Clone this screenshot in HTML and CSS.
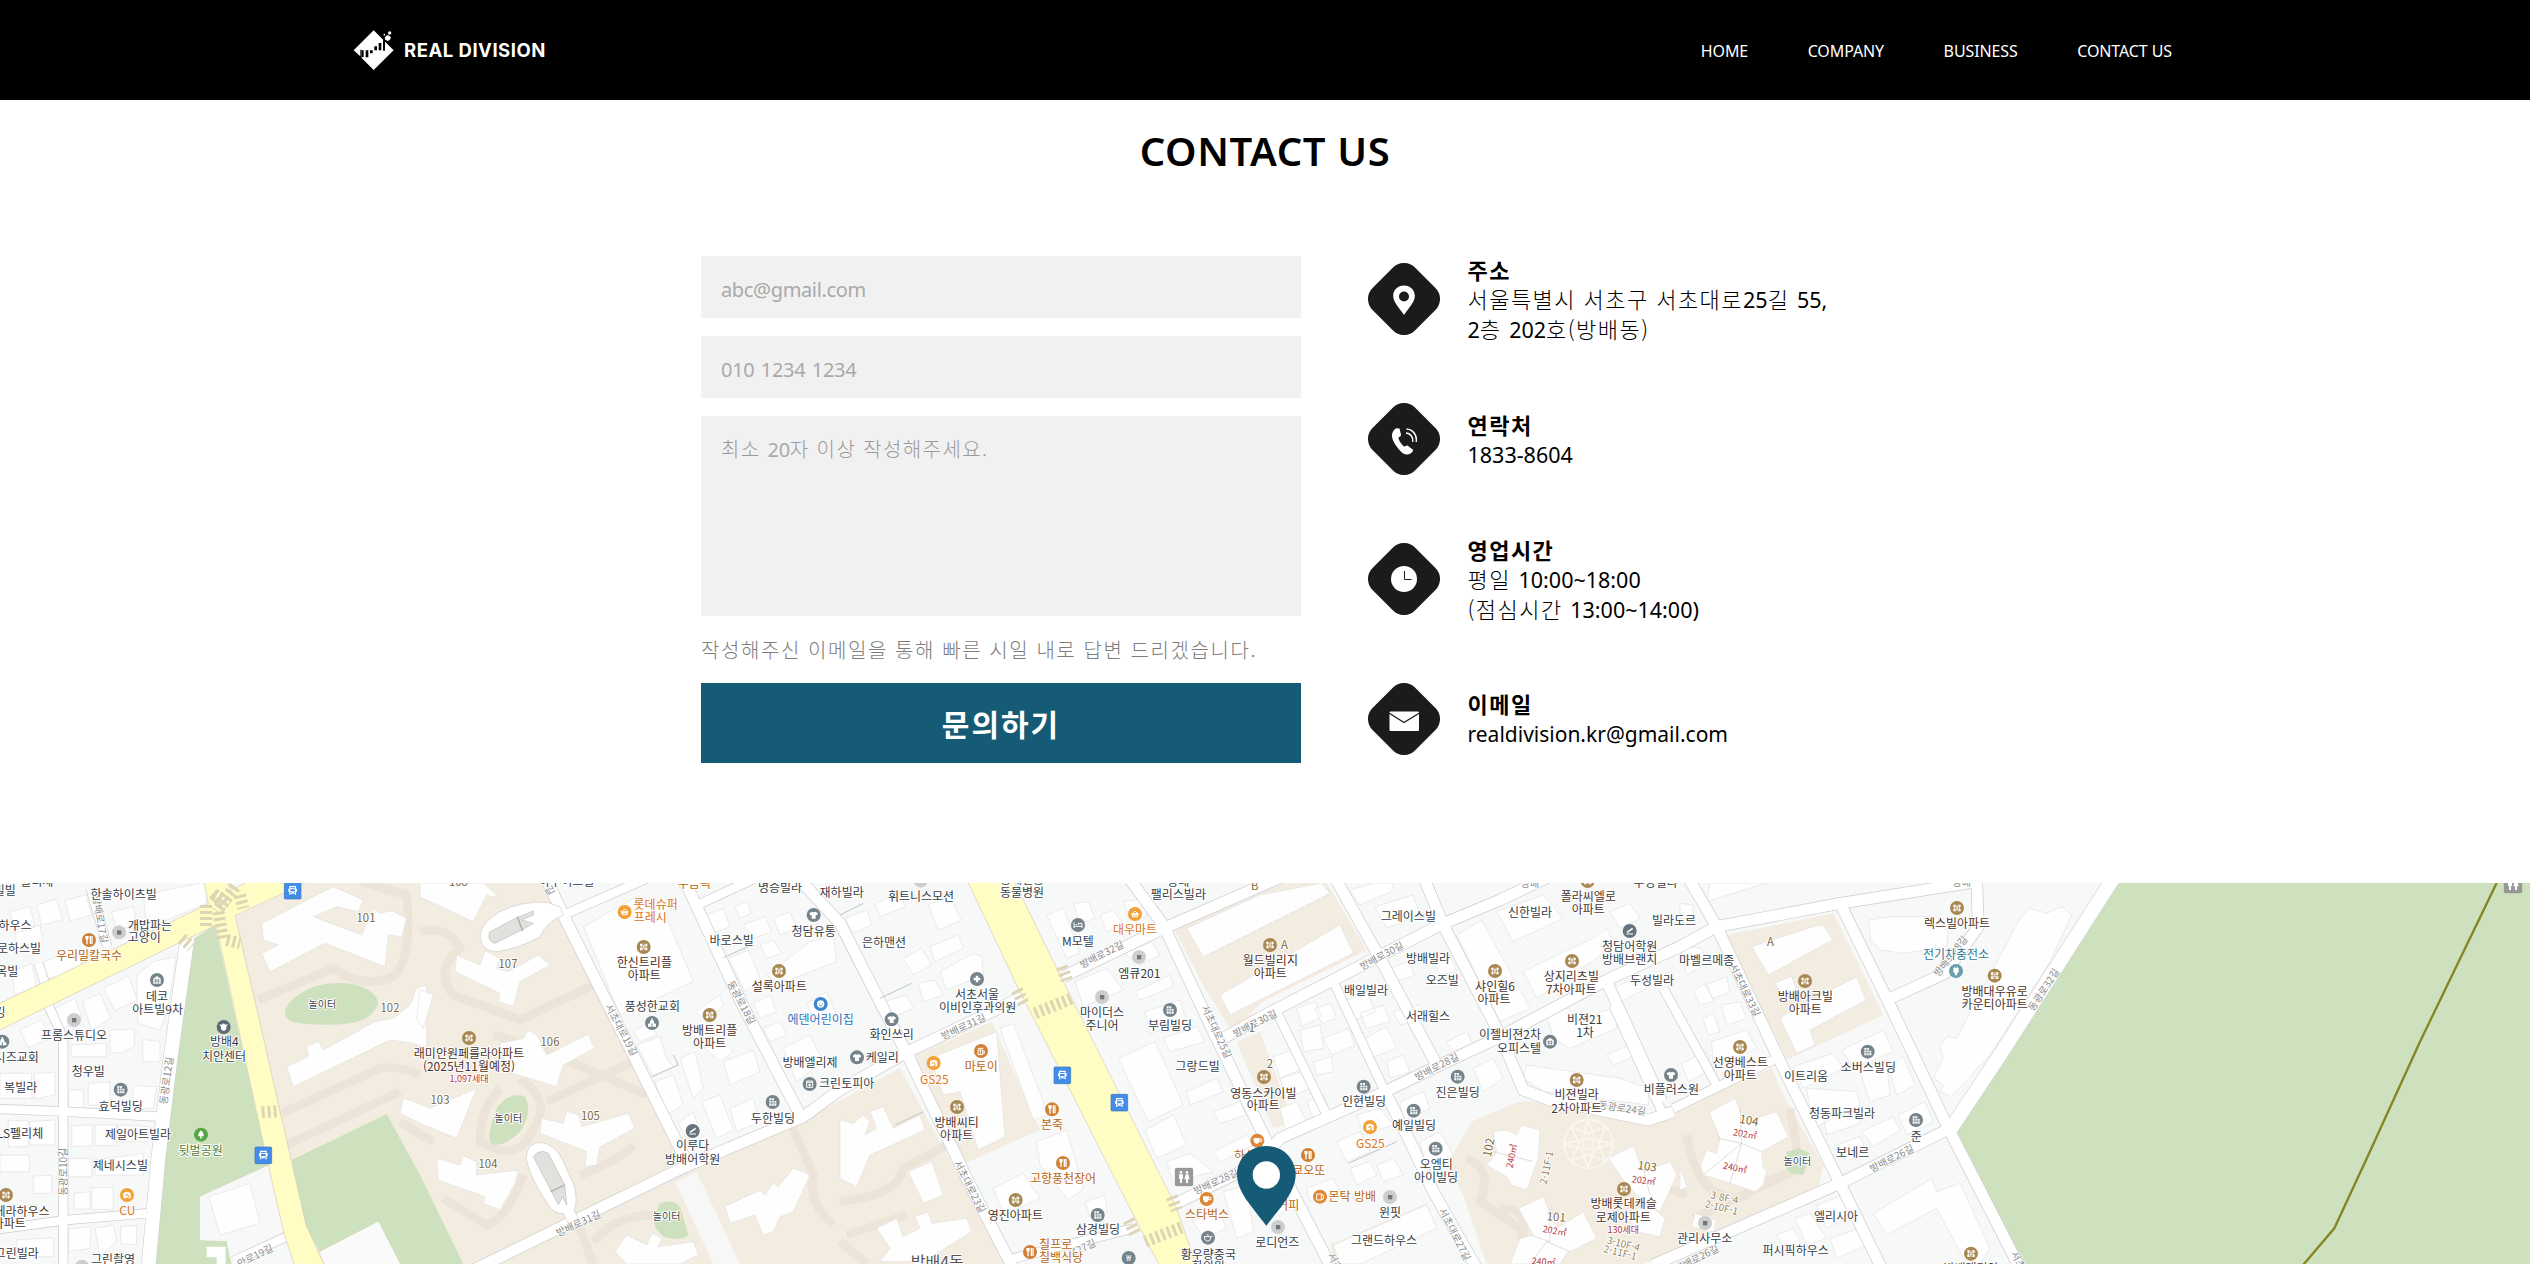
FILE: index.html
```html
<!DOCTYPE html>
<html lang="ko">
<head>
<meta charset="utf-8">
<title>REAL DIVISION - CONTACT US</title>
<link rel="stylesheet" href="styles.css">
</head>
<body>
<header class="header">
  <a class="logo">
    <svg class="logo-mark" viewBox="0 0 126 126" width="42" height="42">
      <path fill="#fff" d="M62 4 92 34V62H96V38L122 64 62 123 26 87V62H22V82L2 64Z"/>
      <path fill="#000" d="M26 64h6v20h-6zM38 64h8v21h-8zM51 64h8v9h-8zM64 52h8v12h-8zM77 42h8v22h-8zM90 34h6v31h-6z"/>
      <path fill="#fff" d="M104 18l7 4 3 5-4 6-6 3-7-4-2-6 4-5z"/>
      <circle cx="110" cy="12" r="5" fill="#fff"/><circle cx="94" cy="17" r="2.500" fill="#fff"/>
    </svg>
    <span class="logo-text">REAL DIVISION</span>
  </a>
  <nav class="nav"><a>HOME</a><a>COMPANY</a><a>BUSINESS</a><a>CONTACT US</a></nav>
</header>
<main>
  <h1 class="title">CONTACT US</h1>
  <section class="contact">
    <form class="form">
      <div class="field"><span class="lat">abc@gmail.com</span></div>
      <div class="field"><span class="num">010 1234 1234</span></div>
      <div class="field field-area">최소 <span class="lat">20</span>자 이상 작성해주세요.</div>
      <p class="note">작성해주신 이메일을 통해 빠른 시일 내로 답변 드리겠습니다.</p>
      <button class="submit" type="button">문의하기</button>
    </form>
    <ul class="info">
      <li class="info-row">
        <svg width="72" height="72" viewBox="0 0 72 72"><rect class="badge" x="6" y="6" width="60" height="60" rx="15.500" transform="rotate(45 36 36)"/><path fill="#fff" fill-rule="evenodd" d="M36 22.500c-6.300 0-10.800 4.600-10.800 10.500C25.200 39 31 44.500 36 52c5-7.500 10.800-13 10.800-19 0-5.900-4.500-10.500-10.800-10.500zM36 28.500a5 5 0 1 1 0 10 5 5 0 0 1 0-10z"/></svg>
        <div><b>주소</b><br>서울특별시 서초구 서초대로<span class="lat">25</span>길 <span class="lat">55,</span><br><span class="lat">2</span>층 <span class="lat">202</span>호(방배동)</div>
      </li>
      <li class="info-row">
        <svg width="72" height="72" viewBox="0 0 72 72"><rect class="badge" x="6" y="6" width="60" height="60" rx="15.500" transform="rotate(45 36 36)"/><path fill="#fff" d="M28.500 25.300l3 .2 1.600 6.500c-.4 1.400-2.500 2-2.700 3 .7 3.500 3.300 6.500 5.600 8.500 1.200.6 2-1.300 3.800-.8l5.200 4c.6 1.500-2 4.400-5.500 4.800-3 .1-5.500-1.600-8-4.600C28 43 24.600 38 24 33.500c-.2-3.500 1.500-7 4.500-8.200z"/><path fill="none" stroke="#fff" stroke-width="1.500" d="M38.500 26c6.500.4 10.500 6 9.800 13M38 30c4.500.3 7.400 4 6.800 8.800"/></svg>
        <div><b>연락처</b><br><span class="lat">1833-8604</span></div>
      </li>
      <li class="info-row">
        <svg width="72" height="72" viewBox="0 0 72 72"><rect class="badge" x="6" y="6" width="60" height="60" rx="15.500" transform="rotate(45 36 36)"/><circle cx="36" cy="36" r="13" fill="#fff"/><path fill="none" stroke="#1b1b1b" d="M36.500 28v8.500H43.500"/></svg>
        <div><b>영업시간</b><br>평일 <span class="lat">10:00~18:00</span><br>(점심시간 <span class="lat">13:00~14:00)</span></div>
      </li>
      <li class="info-row">
        <svg width="72" height="72" viewBox="0 0 72 72"><rect class="badge" x="6" y="6" width="60" height="60" rx="15.500" transform="rotate(45 36 36)"/><rect x="21.500" y="28.500" width="29.500" height="19.500" rx="1" fill="#fff"/><path fill="none" stroke="#1b1b1b" stroke-width="1.300" d="M21 30l15 9.500L51.500 30"/></svg>
        <div><b>이메일</b><br><span class="mail">realdivision.kr@gmail.com</span></div>
      </li>
    </ul>
  </section>
</main>
<section class="map">
<svg class="map-svg" viewBox="0 24 7590 1143" width="2530" height="381">
<defs>
  <g id="apt"><circle r="21" fill="#a98752"/><path fill="#fff" d="M-11-10h9v5h4v-5h9v7h-2v5h2v8h-9V5h-4v5h-9V2h2v-5h-2z"/><path stroke="#a98752" stroke-width="2" d="M-4-8V8M4-8V8M-9 0H9"/></g>
  <g id="bld"><circle r="21" fill="#75838a"/><path fill="#fff" d="M-10-11H4V-3h7V11H-10z"/><path stroke="#75838a" stroke-width="2" d="M-3-11V11M4-3V11M-10-4H4M-10 3H11"/></g>
  <g id="home"><circle r="21" fill="#75838a"/><path fill="#fff" d="M0-12 11-4V11H-11V-4z"/><path stroke="#75838a" stroke-width="2" d="M-4-4V11M4-4V11M-8 0H8M-8 5H8"/></g>
  <g id="shirt"><circle r="21" fill="#75838a"/><path fill="#fff" d="M-5-10Q0-6 5-10L13-5 10 1 6 0V11H-6V0l-4 1-3-6z"/></g>
  <g id="church"><circle r="21" fill="#75838a"/><path fill="#fff" d="M-2-14h4v4L6-5V0l6 3v8H-12V3l6-3v-5l4-5z"/><path stroke="#75838a" stroke-width="3" d="M0 1V11"/></g>
  <g id="pen"><circle r="21" fill="#68747d"/><path stroke="#fff" stroke-width="5" d="M-8 4 9-8"/><path stroke="#fff" stroke-width="3" d="M-10 9H10"/></g>
  <g id="dot"><circle r="21" fill="#ccced0"/><path fill="#74767a" d="M-6-6H7V7H-6z"/></g>
  <g id="food"><circle r="21" fill="#cf8136"/><path stroke="#fff" stroke-width="4" d="M-6-4V13M4-12V12M9-12V12"/><path fill="#fff" d="M-11-12h10v8q-5 7-10 0z"/></g>
  <g id="cup"><circle r="21" fill="#dd8737"/><path fill="#fff" d="M-11-8H7V1q-3 9-9 9t-9-9z"/><path fill="none" stroke="#fff" stroke-width="3" d="M6-5h7v7H5"/></g>
  <g id="mug"><circle r="21" fill="#cf8136"/><path fill="none" stroke="#fff" stroke-width="3" d="M-9-3H5V11H-9zM5 0h5v7H5M-2-3V11M-10-8H7"/></g>
  <g id="basket"><circle r="21" fill="#f3a136"/><path fill="#fff" d="M-12-2h24v3h-2L8 10H-8l-2-9h-2z"/><path fill="none" stroke="#fff" stroke-width="3" d="M-7-2 0-9 7-2"/><path stroke="#f3a136" stroke-width="2" d="M-4 3v5M0 3v5M4 3v5"/></g>
  <g id="store"><circle r="21" fill="#f3a136"/><path fill="#fff" d="M-11 10V-5q4-5 11-5t11 5v15z"/><path fill="none" stroke="#f3a136" stroke-width="3" d="M-4 3q0-5 4-5t4 5v5h-5"/></g>
  <g id="tree"><circle r="21" fill="#58a548"/><path fill="#fff" d="M0-13Q10-3 8 5H2v7h-4V5h-6Q-10-3 0-13z"/></g>
  <g id="police"><circle r="21" fill="#5c6a75"/><path fill="#fff" d="M-13-8l8 1 5-4 5 4 8-1-5 7q2 11-8 12-10-1-8-12z"/></g>
  <g id="bus"><rect x="-25" y="-25" width="50" height="50" rx="3" fill="#438de8" stroke="#3673bd" stroke-width="2"/><path fill="#fff" fill-rule="evenodd" d="M-10-14h20v8h3v9h-3v9H6V9H-6v3h-4V3h-3v-9h3zM-7-10v3H7v-3zM-7-4V2H7v-6zM-7 4v3h3V4zM4 4v3h3V4z"/></g>
  <g id="wc"><rect x="-26" y="-26" width="52" height="52" rx="3" fill="#999" stroke="#818181" stroke-width="2"/><g fill="#fff"><circle cx="-9" cy="-14" r="4"/><circle cx="9" cy="-14" r="4"/><path d="M-15-8h12v14h-3v12h-6V6h-3zM5-8h8l4 15h-5v11H6V7H1z"/></g></g>
  <g id="hosp"><circle r="21" fill="#75838a"/><path stroke="#fff" stroke-width="7" d="M-10 0H10M0-10V10"/></g>
  <g id="bed"><circle r="21" fill="#75838a"/><path fill="none" stroke="#fff" stroke-width="3" d="M-12-8V9M-12 4H12V9M-7-1H-3M1 0V-5H12V4"/></g>
  <g id="kid"><circle r="21" fill="#3d86cb"/><circle r="11" fill="#fff"/><path fill="none" stroke="#3d86cb" stroke-width="3" d="M-5-3v2M5-3v2M-4 4q4 4 8 0"/></g>
  <g id="plug"><circle r="21" fill="#6a9fae"/><path fill="#fff" d="M-5-13h3v4h4v-4h3v4h3V3L3 8v5h-6V8l-5-5V-9h3z"/></g>
  <g id="tea"><circle r="21" fill="#75838a"/><path fill="none" stroke="#fff" stroke-width="3" d="M-11-3H8q0 13-9 13T-11-3M9-2l5-3M-4-8H2"/></g>
  <g id="box"><circle r="21" fill="#dd8737"/><path fill="none" stroke="#fff" stroke-width="3" d="M-10-8H4V10H-10zM4-8l6 3V7L4 10"/></g>
  <g id="laundry"><circle r="21" fill="#75838a"/><path fill="none" stroke="#fff" stroke-width="3" d="M-9-9H9V10H-9zM-9-5H9"/><circle cy="3" r="4" fill="#fff"/></g>
  <g id="road-s">
    <path d="M0 702 180 709 480 725M145 390 190 490V1167M0 1062 200 1035 440 1015M272 40 322 215M700 1158 860 1085M115 265 140 340M3040 1150 3400 1060"/>
    <path d="M1690 120 2010-20M2075 98 2330-20M4840 390 4990 720M4990 340 5150 630M5020 700 5320 555M3830 410 3990 740M4005 330 4155 650"/>
  </g>
  <g id="road-m">
    <path d="M1645 24 1685 110 2050 840M1400 1195 2055 875 2410 725 2520 645 2720 532 3070 365"/>
    <path d="M2020-20 2065 40 2225 385 2400 720M2405 20 2520 145 2650 400 2725 545 2910 930 3045 1190"/>
    <path d="M3190 305 3480 165 3880-10M3380 0 3490 150 3640 470 3800 800 4005 1200"/>
    <path d="M3510 995 3780 860 3840 790 4155 650 4310 575 4500 485 4820 315 5040 215 5150 155 5520 85 5930 20"/>
    <path d="M3670 490 3780 428 4145 240 4320 150 4500 75 4700-20M4000 0 4140 250 4305 560M4260-20 4330 150 4500 480 4570 645 4650 675 4945 735 5020 710"/>
    <path d="M4150 640 4230 800 4300 950 4430 1180M4820 320 4985 680M5060 0 5150 155 5340 560 5520 925 5650 1190"/>
    <path d="M5520 85 5660 370 5845 760 6060 1180M5660 375 5835 295 5935 155 5930 10M4960 1170 5520 925 5850 760"/>
  </g>
  <g id="road-l"><path d="M562 190 510 560 475 850 445 1180M5850 765 6000 540 6340 10"/></g>
</defs>
<rect y="24" width="7590" height="1143" fill="#f7f8f8"/>

<!-- estates -->
<g fill="#f3ece1">
  <path d="M705 125 920 24H1645L1690 130 2060 865 1460 1167H970L915 1050 870 840 770 400z"/>
  <path d="M1500 1167 2040 900 2440 720 2700 580 3020 1167z"/>
  <path d="M2750 540 2975 440 3120 765 2885 870 2750 600z"/>
  <path d="M3515 150 3840 24H3980L4100 225 3780 385 3700 475 3610 330z"/>
  <path d="M3710 500 3780 470 3880 740 3820 760z"/>
  <path d="M4340 870 4415 740 4555 680 4650 680 4950 750 5040 690 5315 580 5345 650 5470 870 5455 935 4930 1167H4460L4390 960z"/>
  <path d="M3990 1110 4280 985 4310 1060 4070 1167H4010z"/>
  <path d="M5180 180 5500 115 5650 420 5360 555z"/>
</g>
<path fill="#f7f7f7" d="M2025 920 2090 890 2220 1167H2140z"/>
<g class="lane">
  <path d="M775 375 1000 280Q1080 340 1170 310 1240 270 1220 60L1080 20M845 715 1140 580Q1190 570 1260 600M850 815 1200 650M1200 740 1300 800M1260 170Q1340 150 1380 220 1300 290 1360 360L1560 435 1780 330M1480 480 1620 520 1940 660M1640 680 1900 560M1500 640Q1440 700 1440 800 1560 870 1600 760 1660 680 1560 610M1330 970 1460 1050Q1530 1020 1570 900M1740 900Q1850 860 1900 810M1740 1060 1780 1167M1780 1100Q1850 1020 1960 1020M2370 740 2440 900Q2420 980 2500 1050"/>
  <path d="M2520 980Q2700 960 2710 880L2860 800M2540 1080 2720 1020M2600 1167 2520 1100"/>
  <path d="M4400 850Q4480 880 4440 980L4560 1060M4500 1000Q4600 1000 4560 1100M4900 900 5060 960M5060 780Q5100 1000 5240 960M5370 700 5400 880 5250 940M5080 1030 5400 880"/>
</g>
<g fill="#cee1bf">
  <path d="M575 195 645 150 800 850 812 868 600 965V1095L680 1098 695 1167H455L470 950 500 700 545 400z"/>
  <path d="M875 855 1160 717 1260 900 1390 1167H1200L1135 1040 960 1130 915 1050z"/>
  <path d="M6350 24H7590V1167H6070L5860 765 5920 670 6080 450z"/>
  <path d="M920 345Q980 315 1060 328 1130 345 1134 385 1120 430 1060 443 980 455 900 445 850 440 855 405 870 370 920 345z"/>
  <path d="M1490 700Q1530 645 1575 665 1600 710 1560 770 1510 820 1475 806 1455 790 1490 700zM1980 985Q2020 970 2040 995L2065 1080Q2040 1100 1990 1085 1960 1060 1960 1030z"/>
  <path d="M5360 830 5395 820 5430 835 5410 900 5370 895 5355 870z"/>
</g>
<path fill="#fafafa" d="M960 1130 1135 1040 1200 1167H975z"/><path fill="#f8f8f8" d="M600 965 812 870 852 1075 690 1150 680 1098 600 1095z"/>
<path fill="#fff" d="M620 1115h57v52h-27v-20h-30z"/>

<!-- buildings -->
<g class="bd">
  <path d="M110 90 170 72 188 135 125 150zM195 75 258 60 275 120 210 138zM30 110 90 95 105 155 45 175zM125 265 215 225 245 250 240 300 140 310zM45 165 120 150 130 200 50 215zM335 110 400 95 410 150 350 165zM430 60 600 24H620V85L440 160zM35 290 95 265 110 335 45 360z"/>
  <path d="M310 340 385 303 412 375 345 407zM247 380 300 355 333 430 275 465zM165 400 225 370 245 425 190 460zM60 465 125 435 150 490 85 518zM410 300 460 260 528 245 505 400 480 465 413 445zM330 465 403 462V515L360 535 330 530zM213 510 320 505V545H213zM428 493 480 500V560H428zM103 595 165 592V660L103 672zM0 595H95V670H0zM265 625 330 620V690H265zM400 632 470 635 460 700H400zM205 645H250V703H205zM25 735 85 738V815H25zM90 740 165 735V810H90zM215 752 277 750V812L215 815zM285 750H350V812H285zM355 750 450 755 440 800H355zM205 850H275V905H205zM285 855 430 835V900H285zM100 903 155 901V955H100zM275 938 340 937V1003H275zM222 955 270 950V1002H222zM0 840H88V890H0zM207 1062 272 1055 270 1120 205 1130zM285 1060 340 1050 350 1100 300 1145zM362 1055 410 1052V1110L362 1105zM50 1095 160 1088V1145H50z"/>
  <path d="M627 965 750 925 780 1045 660 1080z"/>
  <path d="M785 145 1000 35 1090 75 1075 110 1010 95 940 125 1085 180 1120 100 1140 115 1175 107 1220 130 1205 185 1165 180 1155 275 975 205 810 290 785 235 835 210 790 195zM860 575 925 545 920 515 955 498 970 525 1125 440 1180 430 1230 390 1250 340 1280 330V520L1240 505 1170 495 880 635z"/>
  <path d="M1260 24H1450L1500 70 1460 60 1420 140 1260 65zM1370 240 1440 270 1455 228 1500 250 1490 280 1525 290 1615 240 1650 270 1560 320 1540 395 1495 380 1500 355 1365 290zM1200 715 1210 668 1290 700 1430 640 1370 790 1260 745zM1500 505 1570 490 1585 465 1610 480 1640 540 1765 478 1783 520 1690 570 1670 635 1520 590zM1260 345 1300 358 1270 460 1250 430zM1625 730 1690 745 1700 708 1735 720 1745 755 1885 715 1905 760 1800 815 1790 870 1755 875 1760 830 1620 775zM1310 850 1380 870 1390 842 1430 860 1430 900 1555 885 1545 925 1500 1005 1450 985 1455 965 1315 915zM2175 995 2280 945 2295 960 2320 925 2335 935 2380 880 2430 900 2380 1010 2340 1025 2320 1070 2290 1080 2265 1020 2190 1045zM1845 1130 1880 1080 1940 1110 1955 1075 1985 1090 1975 1115 2080 1100 2095 1140 2040 1167H1880z"/>
  <path d="M1750 155 1910 65 1980 80 2080 320 1860 420z"/>
  <path d="M2120 120 2170 100 2190 155 2140 175zM2205 95 2240 80 2255 115 2220 130zM2230 150 2295 125 2315 170 2260 190zM2185 250 2245 225 2285 320 2235 350zM2320 130 2370 110 2390 160 2340 180zM2280 210 2320 195 2345 235 2300 250zM2300 300 2430 200 2500 185 2510 260 2380 310 2370 350zM2260 385 2310 360 2330 410 2280 430zM2420 385 2480 350 2510 420 2450 450zM2290 460 2340 440 2360 480 2310 500z"/>
  <path d="M1910 510 1980 485 2000 550 2020 575 1960 605zM1965 620 2020 600 2050 690 2000 720zM2040 550 2085 530 2110 640 2080 670zM2105 510 2150 480 2200 530 2160 560zM2170 560 2260 525 2280 590 2190 630zM2105 680 2160 660 2200 765 2150 790zM2190 700 2260 670 2280 740 2210 770zM2350 520 2430 480 2470 560 2390 620zM2085 410 2160 360 2170 390 2120 440zM1900 470 1950 440 1970 480 1920 500zM2035 745 2080 710 2100 770 2060 790z"/>
  <g transform="translate(2520)">
    <path d="M15 130 80 105 95 150 40 175zM105 85 180 55 195 95 120 125zM265 90 330 65 365 135 295 165zM190 250 245 220 275 270 220 300zM270 215 355 180 370 220 285 260zM300 290 400 235 425 245 430 300 320 345zM235 325 285 315 310 360 250 380zM130 380 200 360 220 400 150 430zM620 120 670 100 720 235 680 250zM700 85 745 80 765 130 720 145zM780 120 820 105 850 150 800 170zM850 80 915 70 920 125 870 135zM855 235 935 200 960 240 900 270zM705 320 800 280 850 345 730 395zM885 350 990 300 1000 335 900 375zM915 410 1020 375 1040 440 930 475zM835 550 945 500 1030 690 925 740zM1040 650 1130 610 1150 650 1050 690zM970 490 1070 455 1095 500 990 530z"/>
    <path d="M480 460 520 445 625 720 580 735zM270 550 470 470 495 785 415 825 360 650 310 660zM590 800 680 765 730 940 685 975 600 870zM460 940 550 895 600 970 490 1020zM735 980 795 960 800 1010 750 1025zM915 765 1000 720 1040 810 950 850zM980 860 1050 835 1120 890 1000 920zM1120 710 1200 680 1220 720 1140 745zM1060 1040 1130 1000 1160 1060 1090 1090zM1150 950 1220 930 1240 1070 1190 1090zM1120 830 1220 780 1240 810 1140 860z"/>
    <path d="M0 735 40 745 70 720 90 740 75 780 110 760 90 710 130 695 160 760 240 720 255 765 90 840 50 935 0 910zM205 890 275 860 310 960 250 985zM110 1060 170 1030 190 1085 240 1060 225 1025 265 1010 275 1045 380 1030 395 1070 250 1160 120 1160 150 1120z"/>
  </g>
  <g transform="translate(3780)">
    <path d="M-220 160 0 60 185 24 210 55-170 245zM-120 360 240 150 280 235-90 420zM345 95 460 60 480 120 380 160zM270 45 340 24H400L395 50 300 90zM590 180 665 135 810 400 720 440zM710 110 850 60 910 130 760 200zM790 290 870 250 1000 190 1040 160 1060 200 1010 250 830 370zM1050 110 1110 85 1140 130 1080 160zM1060 340 1140 300 1160 340 1080 380z"/>
    <path d="M110 400 165 380 185 425 125 455zM165 400 210 385 230 430 185 445zM120 465 180 450 190 520 130 530zM190 490 265 460 285 510 215 540zM160 560 215 545 220 590 170 600zM250 380 320 350 345 410 275 440zM390 280 445 260 465 300 410 320zM300 415 370 390 390 440 320 460zM315 490 380 455 410 520 330 550zM400 410 480 390 500 430 420 450zM380 560 430 540 450 590 390 610zM560 500 620 470 640 510 580 530zM520 260 570 240 590 290 540 300zM640 580 700 550 730 610 670 650zM40 545 110 520 130 580 60 610zM60 610 130 590 150 640 80 670zM60 700 110 680 140 740 80 780zM140 680 190 660 210 710 160 730zM290 720 360 700 400 750 310 780zM230 800 300 770 330 830 260 860zM420 680 490 650 510 700 430 740zM480 800 540 770 580 840 500 880zM270 880 330 860 350 900 290 930zM350 870 400 850 430 900 370 920zM140 940 220 910 240 950 150 980zM20 960 60 940 90 1000 40 1030z"/>
    <path d="M860 420 920 400 970 450 1020 410 1070 400 1070 460 930 520 880 490zM1040 540 1130 500 1150 530 1060 570zM800 570 1080 610 1165 640 1165 690 850 650 790 610zM220 1110 500 990 530 1060 300 1167H240z"/>
    <path d="M700 770 740 765 770 780 785 750 840 765 835 850 800 945 755 930 740 905 680 870 710 830zM1045 850 1120 812 1150 890 1230 860 1250 900 1200 1010 1150 980 1100 930zM1100 1020 1160 980 1215 1030 1200 1085 1130 1070zM775 1000 850 965 890 1060 970 1010 1010 1090 920 1135 900 1167H750L780 1090 820 1080z"/>
  </g>
  <g transform="translate(5040)">
    <path d="M215 215 400 155 430 150 458 195 265 300zM285 325 335 303 350 350 310 360zM300 430 380 380 530 307 558 375 390 465 405 510 350 535zM565 135 630 125 770 125 805 170 800 215 670 235 600 225 572 195zM1020 130 1050 100 1100 115 1145 95 1175 120 1110 260 930 540 815 665 780 650 790 630 760 610 790 550 780 515 800 485 830 490zM40 345 80 325 100 380 60 390zM75 330 140 305 150 350 100 370zM125 390 180 380 200 430 140 450zM70 430 100 415 120 470 85 480zM5 565 80 530 100 580 25 620zM95 500 200 465 230 520 100 580zM0 210 60 220 90 260 20 300zM485 525 610 465 640 530 520 580zM540 590 620 560 630 660 570 680zM625 570 670 545 705 630 650 660zM340 575 460 535 490 580 370 640zM380 640 530 650 540 690 400 760zM430 720 530 720 540 745 440 780zM545 770 640 725 660 765 580 815zM470 810 540 785 560 830 500 860zM655 720 735 680 760 740 680 780z"/>
    <path d="M88 712 165 670 195 740 290 710 325 785 245 830 250 880 260 885 250 930 225 950 150 925 70 900 62 870 80 825 110 835 120 790zM0 880 22 935 0 945zM580 1015 755 910 770 950 840 925 930 1120 900 1167 850 1150 770 1000 620 1080zM345 1030 390 1015 440 1090 380 1110zM410 990 490 960 520 1020 440 1060zM290 1080 340 1060 370 1120 320 1140zM450 1090 540 1060 560 1110 470 1150zM45 1015 110 1035 100 1070 35 1055zM0 85 40 90V130H0zM90 24H260L80 80z"/>
  </g>
</g>
<g fill="none" stroke="#c4bfb9" stroke-width="1.500"><path d="M4480 830 4600 860M4640 1100 4590 1167M4640 1100 4710 1130M4650 1000V1100L4590 1080M5220 700 5225 805 5285 830M5225 805 5155 790M5225 805 5190 925M5110 900 5225 805M4930 880 4950 960"/></g>
<g fill="none" stroke="#fbf7ee" stroke-width="5"><circle cx="4765" cy="807" r="73"/><circle cx="4765" cy="807" r="16"/><path d="M4765 734 4785 795 4838 807 4783 822 4765 880 4747 822 4692 807 4747 795zM4713 755 4765 775 4817 755 4795 807 4817 859 4765 838 4713 859 4737 807z"/></g>

<!-- streets -->
<g class="case"><use class="ws" href="#road-s"/><use class="wm" href="#road-m"/><use class="wl" href="#road-l"/></g>
<g class="fill"><use class="ws" href="#road-s"/><use class="wm" href="#road-m"/><use class="wl" href="#road-l"/></g>
<!-- car park ramps -->
<g fill="#e3e1dd">
  <path fill="#fff" stroke="#cfcbc4" stroke-width="2" d="M1640 82Q1560 78 1500 110 1440 145 1440 185 1445 230 1490 230 1560 220 1620 185 1640 140 1690 120L1680 95z"/>
  <path stroke="#bbb" stroke-width="2" d="M1468 172 1550 128 1600 108 1600 120 1565 135 1600 145 1565 165 1485 205Q1462 200 1468 172z"/><path stroke="#aaa" stroke-width="4" d="M1552 125 1568 168"/>
  <path fill="#fff" stroke="#cfcbc4" stroke-width="2" d="M1578 850Q1580 802 1625 802 1665 810 1685 850L1722 930Q1735 980 1722 1005L1735 1030 1705 1045 1690 1015Q1665 1020 1645 990 1590 910 1578 850z"/>
  <path stroke="#bbb" stroke-width="2" d="M1600 845Q1620 820 1645 835L1694 930 1700 990 1688 965 1675 990 1655 950z"/><path stroke="#aaa" stroke-width="4" d="M1652 950 1694 930"/>
</g>
<g fill="#fffcc4" stroke="#d2c9bd" stroke-width="2">
  <path d="M-5 387 625 87 612 20H683L692 46 745 20H925L705 122 770 400 870 840 918 1050 975 1175H885L852 1075 800 850 648 150-5 467z"/>
  <path d="M2903 20 3050 330 3400 1020 3480 1175H3590L3530 1000 3375 690 3180 300 3043 20z"/>
</g>
<g class="zebra">
  <path d="M640 55 680 95M705 35 650 110"/><path d="M618 90V162M655 110 668 190M680 195 720 205M720 60 730 100M640 60 665 70M785 712 840 708M545 190 575 215"/>
  <path d="M3105 415 3215 370M3435 1100 3550 1055M3050 345 3070 385M3185 275 3200 315M3385 1035 3405 1075M3515 965 3530 1005"/>
</g>
<path fill="none" stroke="#868423" stroke-width="7" d="M7490 24 7260 500 7105 840 7003 1060 6905 1175"/>
<g stroke="#bfc3c8" stroke-width="3" fill="none"><path d="M4045 865 4190 800M2685 750 2770 710M2640 370 2735 325M1955 605 2035 570 2020 540M2170 248 2255 210M2520 120 2590 85"/></g>

<!-- street names -->
<g class="st">
  <text transform="translate(290 135) rotate(80)">방배로17길</text>
  <text transform="translate(510 618) rotate(-82)">동광로12길</text>
  <text transform="translate(200 890) rotate(-90)">동광로10길</text>
  <text transform="translate(770 1152) rotate(-27)">안로19길</text>
  <text transform="translate(1855 470) rotate(62)">서초대로19길</text>
  <text transform="translate(2215 388) rotate(62)">동광로18길</text>
  <text transform="translate(1740 1055) rotate(-25)">방배로31길</text>
  <text transform="translate(1640 52) rotate(60)">길</text>
  <text transform="translate(2895 465) rotate(-25)">방배로31길</text>
  <text transform="translate(3310 248) rotate(-27)">방배로32길</text>
  <text transform="translate(2900 940) rotate(63)">서초대로23길</text>
  <text transform="translate(3640 475) rotate(65)">서초대로25길</text>
  <text transform="translate(3770 455) rotate(-27)">방배로30길</text>
  <text transform="translate(3652 930) rotate(-24)">방배로28길</text>
  <text transform="translate(3250 1130) rotate(-25)">로27길</text>
  <text transform="translate(4150 252) rotate(-28)">방배로30길</text>
  <text transform="translate(4315 585) rotate(-27)">방배로28길</text>
  <text transform="translate(4355 1083) rotate(63)">서초대로27길</text>
  <text transform="translate(4865 710) rotate(8)">동광로24길</text>
  <text transform="translate(5225 350) rotate(64)">서초대로33길</text>
  <text transform="translate(5860 250) rotate(-52)">방배로28길</text>
  <text transform="translate(6140 350) rotate(-57)">동광로32길</text>
  <text transform="translate(5680 860) rotate(-27)">방배로26길</text>
  <text transform="translate(5095 1160) rotate(-27)">방배로26길</text>
  <text transform="translate(3995 1165) rotate(63)">서초</text>
  <text transform="translate(6045 1160) rotate(63)">서초</text>
  <text x="4590" y="35">방배</text><text x="5885" y="32">방배</text>
</g>

<!-- places -->
<g class="lb">
  <g>
    <text x="14" y="61">빌빌</text><text x="110" y="34">빌리체</text><text x="371" y="73">한솔하이츠빌</text><text x="45" y="164">하우스</text><text x="57" y="235">로하스빌</text><text x="22" y="302">옥빌</text><text x="450" y="165">개밥파는</text><text x="433" y="202">고양이</text>
    <text x="471" y="377">데코</text><text x="473" y="416">아트빌9차</text><text x="222" y="496">프롬스튜디오</text><text x="50" y="562">시즈교회</text><text x="265" y="602">청우빌</text><text x="62" y="650">복빌라</text><text x="362" y="707">효덕빌딩</text><text x="50" y="788">LLS펠리체</text><text x="414" y="793">제일아트빌라</text><text x="361" y="884">제네시스빌</text><text x="50" y="1148">그린빌라</text><text x="339" y="1166">그린촬영</text><text x="0" y="425">킹</text>
    <text x="673" y="514">방배4</text><text x="672" y="557">치안센터</text><text class="sm" x="967" y="400">놀이터</text>
    <text class="br" x="66" y="1022">메라하우스</text><text class="br" x="28" y="1060">아파트</text>
    <text class="or" x="267" y="256">우리밀칼국수</text><text class="og" x="382" y="1019">CU</text><text class="gr" x="602" y="840">뒷벌공원</text>
    <text class="no" x="1098" y="140">101</text><text class="no" x="1170" y="410">102</text>
    <use href="#food" x="267" y="195"/><use href="#dot" x="357" y="172"/><use href="#home" x="471" y="315"/><use href="#dot" x="222" y="435"/><use href="#church" x="7" y="500"/><use href="#bld" x="362" y="644"/><use href="#police" x="671" y="456"/><use href="#tree" x="603" y="779"/><use href="#store" x="381" y="960"/><use href="#apt" x="18" y="960"/><use href="#bus" x="878" y="47"/><use href="#bus" x="790" y="841"/><use href="#dot" x="246" y="1175"/>
  </g>
  <g transform="translate(1260)">
    <text class="no" x="115" y="34">108</text><text x="440" y="34">하우이스빌</text><text class="or" x="823" y="38">우금떡</text><text x="1080" y="50">명승빌라</text><text x="1265" y="67">재하빌라</text><text x="935" y="210">바로스빌</text><text x="1181" y="182">청담유통</text><text x="697" y="409">풍성한교회</text><text x="1170" y="576">방배엘리제</text><text x="1280" y="640">크린토피아</text><text x="1059" y="743">두한빌딩</text><text x="818" y="825">이루다</text><text x="818" y="868">방배어학원</text>
    <text class="og" x="707" y="103">롯데슈퍼</text><text class="og" x="691" y="142">프레시</text><text class="bl" x="1202" y="447">에덴어린이집</text>
    <g class="br"><text x="673" y="275">한신트리플</text><text x="673" y="314">아파트</text><text x="1078" y="347">설록아파트</text><text x="869" y="481">방배트리플</text><text x="869" y="520">아파트</text><text x="147" y="550">래미안원페를라아파트</text><text x="147" y="589">(2025년11월예정)</text></g>
    <text class="rd" x="147" y="620">1,097세대</text>
    <text class="no" x="264" y="279">107</text><text class="no" x="390" y="513">106</text><text class="no" x="60" y="687">103</text><text class="no" x="511" y="735">105</text><text class="no" x="204" y="878">104</text>
    <text class="sm" x="265" y="741">놀이터</text><text class="sm" x="740" y="1034">놀이터</text>
    <use href="#basket" x="614" y="111"/><use href="#apt" x="671" y="216"/><use href="#shirt" x="1181" y="120"/><use href="#apt" x="1077" y="288"/><use href="#kid" x="1202" y="387"/><use href="#apt" x="869" y="420"/><use href="#church" x="696" y="444"/><use href="#apt" x="147" y="489"/><use href="#laundry" x="1169" y="627"/><use href="#bld" x="1058" y="681"/><use href="#pen" x="818" y="768"/>
  </g>
  <g transform="translate(2520)">
    <use href="#dot" x="242" y="17"/><text x="243" y="79">휘트니스모션</text><text x="546" y="27">방배친동</text><text x="546" y="65">동물병원</text><text x="1015" y="34">방배</text><text x="1015" y="73">팰리스빌라</text><text x="132" y="217">은하맨션</text><text x="714" y="212">M모텔</text><text x="898" y="309">엠큐201</text><text x="411" y="372">서초서울</text><text x="413" y="411">이비인후과의원</text><text x="786" y="427">마이더스</text><text x="786" y="466">주니어</text><text x="990" y="466">부림빌딩</text><text x="155" y="493">화인쓰리</text><text x="127" y="560">케일리</text><text x="1073" y="588">그랑드빌</text><text x="774" y="1078">삼경빌딩</text><text x="1105" y="1151">황우량중국</text><text x="1105" y="1188">한의원</text>
    <text class="big" x="292" y="1178">방배4동</text>
    <g class="br"><text x="350" y="755">방배씨티</text><text x="350" y="795">아파트</text><text x="526" y="1034">영진아파트</text><text x="1270" y="668">영동스카이빌</text><text x="1270" y="706">아파트</text><text x="1291" y="269">월드빌리지</text><text x="1291" y="308">아파트</text></g>
    <g class="or"><text x="424" y="589">마토이</text><text x="636" y="763">본죽</text><text x="669" y="925">고향풍천장어</text><text x="1101" y="1032">스타벅스</text><text x="647" y="1123">칠프로</text><text x="663" y="1162">칠백식당</text><text x="1215" y="856">하삼</text></g>
    <g class="og"><text x="885" y="177">대우마트</text><text x="283" y="626">GS25</text></g>
    <text class="no" x="1244" y="44">B</text><text class="no" x="1333" y="223">A</text><text class="no" x="1290" y="578">2</text><text class="no" x="1236" y="472">1</text>
    <use href="#bed" x="714" y="150"/><use href="#basket" x="885" y="117"/><use href="#dot" x="897" y="246"/><use href="#hosp" x="411" y="312"/><use href="#dot" x="786" y="366"/><use href="#bld" x="990" y="405"/><use href="#shirt" x="155" y="433"/><use href="#shirt" x="51" y="547"/><use href="#store" x="281" y="564"/><use href="#mug" x="423" y="528"/><use href="#bus" x="667" y="601"/><use href="#bus" x="838" y="683"/><use href="#apt" x="351" y="696"/><use href="#food" x="636" y="703"/><use href="#food" x="669" y="864"/><use href="#wc" x="1032" y="906"/><use href="#cup" x="1100" y="972"/><use href="#apt" x="527" y="975"/><use href="#bld" x="773" y="1020"/><use href="#tea" x="1104" y="1088"/><use href="#food" x="570" y="1131"/><circle cx="866" cy="1149" r="21" fill="#75838a"/><text class="won" x="866" y="1158">₩</text><use href="#cup" x="1252" y="797"/><use href="#apt" x="1290" y="210"/><use href="#apt" x="1272" y="606"/>
  </g>
  <g transform="translate(3780)">
    <text x="445" y="139">그레이스빌</text><text x="810" y="127">신한빌라</text><text x="504" y="265">방배빌라</text><text x="547" y="330">오즈빌</text><text x="318" y="361">배일빌라</text><text x="504" y="439">서래힐스</text><text x="1187" y="37">우성빌라</text><text x="1242" y="151">빌라도르</text><text x="1109" y="229">청담어학원</text><text x="1109" y="268">방배브랜치</text><text x="1176" y="331">두성빌라</text><text x="974" y="448">비젼21</text><text x="975" y="487">1차</text><text x="750" y="493">이젤비젼2차</text><text x="777" y="534">오피스텔</text><text x="312" y="694">인현빌딩</text><text x="593" y="667">진은빌딩</text><text x="462" y="766">예일빌딩</text><text x="529" y="882">오엠티</text><text x="528" y="922">아이빌딩</text><text x="390" y="1027">윈핏</text><text x="372" y="1110">그랜드하우스</text><text x="52" y="1116">로디언즈</text><text x="1234" y="658">비플러스원</text>
    <g class="br"><text x="985" y="79">폴라씨엘로</text><text x="985" y="116">아파트</text><text x="705" y="349">샤인힐6</text><text x="702" y="387">아파트</text><text x="934" y="318">상지리츠빌</text><text x="934" y="357">7차아파트</text><text x="950" y="672">비젼빌라</text><text x="950" y="715">2차아파트</text><text x="1091" y="1000">방배롯데캐슬</text><text x="1090" y="1041">로제아파트</text></g>
    <text class="rd" x="1090" y="1073">130세대</text><text class="og" x="331" y="818">GS25</text>
    <g class="or"><text x="130" y="900">쿄쿄오또</text><text x="277" y="978">몬탁 방배</text><text x="85" y="1005">커피</text></g>
    <g class="no"><text transform="translate(698 820) rotate(-78)">102</text><text transform="translate(1160 886) rotate(8)">103</text><text transform="translate(888 1038) rotate(4)">101</text></g>
    <g class="fl"><text transform="translate(870 880) rotate(-78)">2-11F-1</text><text transform="translate(1088 1117) rotate(14)">3-10F-4</text><text transform="translate(1078 1143) rotate(14)">2-11F-1</text></g>
    <g class="rd"><text transform="translate(765 845) rotate(-78)">240㎡</text><text transform="translate(1150 926) rotate(7)">202㎡</text><text transform="translate(882 1077) rotate(10)">202㎡</text><text transform="translate(850 1170) rotate(5)">240㎡</text></g>
    <use href="#apt" x="983" y="18"/><use href="#pen" x="1109" y="168"/><use href="#apt" x="936" y="258"/><use href="#apt" x="705" y="288"/><use href="#home" x="870" y="500"/><use href="#apt" x="950" y="615"/><use href="#shirt" x="1233" y="600"/><use href="#bld" x="593" y="605"/><use href="#bld" x="311" y="635"/><use href="#bld" x="461" y="707"/><use href="#store" x="330" y="756"/><use href="#bld" x="527" y="821"/><use href="#food" x="144" y="840"/><use href="#box" x="180" y="965"/><use href="#dot" x="390" y="966"/><use href="#dot" x="54" y="1056"/><use href="#apt" x="1092" y="942"/>
  </g>
  <g transform="translate(5040)">
    <text x="80" y="271">마벨르메종</text><text x="565" y="592">소버스빌딩</text><text x="378" y="619">이트리움</text><text x="486" y="728">청동파크빌라</text><text x="709" y="797">준</text><text x="518" y="846">보네르</text><text x="468" y="1039">엘리시아</text><text x="347" y="1141">퍼시픽하우스</text><text x="74" y="1104">관리사무소</text>
    <g class="br"><text x="831" y="160">렉스빌아파트</text><text x="376" y="379">방배아크빌</text><text x="376" y="418">아파트</text><text x="944" y="364">방배대우유로</text><text x="944" y="403">카운티아파트</text><text x="181" y="577">선영베스트</text><text x="181" y="615">아파트</text><text x="873" y="1193">방배래미안</text></g>
    <text class="tl" x="828" y="253">전기차충전소</text><text class="no" x="271" y="212">A</text><text class="sm" x="352" y="870">놀이터</text>
    <g class="no"><text transform="translate(205 748) rotate(10)">104</text></g>
    <g class="rd"><text transform="translate(193 787) rotate(10)">202㎡</text><text transform="translate(163 888) rotate(12)">240㎡</text></g>
    <g class="fl"><text transform="translate(131 978) rotate(12)">3-8F-4</text><text transform="translate(122 1008) rotate(14)">2-10F-1</text></g>
    <use href="#apt" x="831" y="99"/><use href="#plug" x="828" y="288"/><use href="#apt" x="944" y="302"/><use href="#apt" x="375" y="318"/><use href="#apt" x="180" y="516"/><use href="#bld" x="563" y="530"/><use href="#bld" x="708" y="735"/><use href="#dot" x="75" y="1044"/><use href="#apt" x="873" y="1136"/><use href="#wc" x="2499" y="27"/>
  </g>
</g>
<path fill="#155b75" d="M3799 813c-50 0-88 38-88 86 0 28 15 58 36 86 18 25 36 47 52 67 16-20 34-42 52-67 21-28 36-58 36-86 0-48-38-86-88-86z"/>
<circle cx="3799" cy="900" r="41" fill="#fff"/>
</svg>
</section>
</body>
</html>
```
FILE: styles.css
```css
* { box-sizing: border-box; margin: 0; padding: 0; }
body { width: 2530px; height: 1264px; overflow: hidden; background: #fff; color: #000; font-family: "Noto Sans", "Noto Sans CJK KR", sans-serif; }

.header { display: flex; justify-content: space-between; align-items: center; height: 100px; padding: 0 358px 0 353px; background: #000; color: #fff; }
.logo { display: flex; align-items: center; gap: 9px; }
.logo-mark { display: block; }
.logo-text { font: 700 18.5px/20px Inter, sans-serif; letter-spacing: 0.5px; }
.nav { display: flex; gap: 59.5px; font-size: 16px; line-height: 20px; padding-top: 2px; letter-spacing: -0.1px; }

.title { height: 155px; padding-top: 23px; text-align: center; font-size: 40px; line-height: 55px; font-weight: 600; letter-spacing: 0.6px; }
.contact { display: flex; gap: 67px; padding-left: 701px; height: 628px; }

.form { display: flex; flex-direction: column; gap: 18px; width: 600px; padding-top: 1px; }
.field { height: 62px; padding: 0 20px; background: #f1f1f1; color: #a9a9a9; font-size: 20px; line-height: 66px; letter-spacing: 1.4px; font-weight: 300; font-family: "Noto Sans CJK KR", sans-serif; }
.field-area { height: 200px; color: #9a9a9a; }
.field-area .lat { color: #a9a9a9; }
.note { height: 31px; color: #7c7c7c; font-size: 20px; line-height: 32px; letter-spacing: 1.57px; font-weight: 300; font-family: "Noto Sans CJK KR", sans-serif; white-space: nowrap; }
.submit { height: 80px; border: 0; background: #155b75; color: #fff; font: 700 30px/80px "Noto Sans CJK KR", sans-serif; letter-spacing: 2px; }
.lat { font-family: "Noto Sans", sans-serif; font-weight: 400; letter-spacing: -0.35px; }
.num { font-family: "Noto Sans", sans-serif; font-weight: 400; letter-spacing: -0.3px; word-spacing: 1.5px; }

.info { display: flex; flex-direction: column; gap: 68px; padding-top: 8px; list-style: none; }
.info-row { display: flex; align-items: center; gap: 27.500px; height: 72px; font-size: 22px; line-height: 29px; font-weight: 300; letter-spacing: 1.45px; font-family: "Noto Sans CJK KR", sans-serif; white-space: nowrap; }
.info-row b { font-weight: 700; }
.info-row .lat { font-size: 21.500px; letter-spacing: 0; }
.mail { font-family: "Noto Sans", sans-serif; font-weight: 400; font-size: 21px; letter-spacing: 0; }
.badge { fill: #1b1b1b; }

.map { height: 381px; overflow: hidden; }
.map-svg { display: block; }
.bd { fill: #fefefe; stroke: #e2e1df; stroke-width: 2; }
.lane { fill: none; stroke: #ece4d8; stroke-width: 26; stroke-linejoin: round; }
.case, .fill { fill: none; stroke-linejoin: round; }
.case { stroke: #cbcbcf; }
.fill { stroke: #fff; }
.case .ws { stroke-width: 30px; }
.case .wm { stroke-width: 37px; }
.case .wl { stroke-width: 45px; }
.fill .ws { stroke-width: 26px; }
.fill .wm { stroke-width: 33px; }
.fill .wl { stroke-width: 42px; }
.zebra { fill: none; stroke: #ddd5b4; stroke-width: 36; stroke-dasharray: 9 9; }
.lb, .st { font-family: "Noto Sans CJK KR", sans-serif; text-anchor: middle; }
.lb text { paint-order: stroke; stroke: #fff; stroke-width: 6px; stroke-linejoin: round; }
.lb { font-size: 36px; fill: #353d46; }
.st { font-size: 30px; fill: #8a8a8a; }
.st text { paint-order: stroke; stroke: #fff; stroke-width: 4px; }
.br { fill: #4b3229; }
.or { fill: #b9640f; }
.og { fill: #dd7418; }
.bl { fill: #2a6fb8; }
.gr { fill: #4d7e2f; }
.tl { fill: #2d7890; }
.lb .sm { font-size: 30px; fill: #3c4a52; }
.no { fill: #7b673b; font-size: 34px; }
.fl { fill: #93815a; font-size: 29px; }
.rd { fill: #b0323a; font-size: 27px; }
.lb .big { font-size: 48px; fill: #555; }
.lb .won { font-size: 26px; fill: #fff; stroke: none; }
```
